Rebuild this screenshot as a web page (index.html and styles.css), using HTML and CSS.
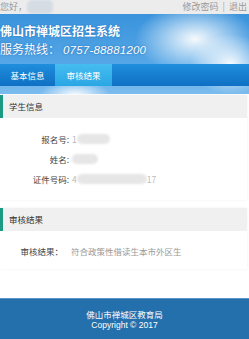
FILE: index.html
```html
<!DOCTYPE html>
<html lang="zh-CN">

<head>
    <meta charset="UTF-8">
    <meta name="viewport" content="width=device-width, initial-scale=1.0">
    <title>佛山市禅城区招生系统</title>
    <link rel="stylesheet" href="styles.css">
</head>

<body>
    <div class="topbar">
        <div class="hello">您好，<span class="blur blur-name"></span></div>
        <div class="links">修改密码 <span class="sep">|</span> 退出</div>
    </div>

    <div class="header">
        <div class="cloud c1"></div>
        <div class="cloud c2"></div>
        <div class="cloud c3"></div>
        <h1 class="title">佛山市禅城区招生系统</h1>
        <div class="hotline">服务热线：<span class="num">0757-88881200</span></div>
        <div class="nav">
            <a href="javascript:;">基本信息</a>
            <a href="javascript:;" class="active">审核结果</a>
        </div>
    </div>

    <div class="panel">
        <div class="panel-head">学生信息</div>
        <div class="panel-body">
            <div class="row">
                <span class="label">报名号:</span>
                <span class="value">1<span class="blur" style="width:33px"></span></span>
            </div>
            <div class="row">
                <span class="label">姓名:</span>
                <span class="value"><span class="blur" style="width:26px"></span></span>
            </div>
            <div class="row">
                <span class="label">证件号码:</span>
                <span class="value">4<span class="blur" style="width:70px"></span>17</span>
            </div>
        </div>
    </div>

    <div class="panel">
        <div class="panel-head">审核结果</div>
        <div class="panel-body result">
            <div class="row">
                <span class="label">审核结果：</span>
                <span class="value gray">符合政策性借读生本市外区生</span>
            </div>
        </div>
    </div>

    <div class="footer">
        <p>佛山市禅城区教育局</p>
        <p>Copyright © 2017</p>
    </div>
</body>

</html>
```

FILE: styles.css
```css
* {
    margin: 0;
    padding: 0;
}

body {
    font-family: "Noto Sans CJK SC", "Liberation Sans", sans-serif;
    background-color: #fff;
    width: 249px;
}

.topbar {
    height: 14px;
    background-color: #ececec;
    display: flex;
    justify-content: space-between;
    align-items: center;
    font-size: 9px;
    color: #999;
    line-height: 14px;
}

.hello {
    display: flex;
    align-items: center;
}

.blur {
    display: inline-block;
    height: 10px;
    background-color: #e6e6e6;
    border-radius: 5px;
    filter: blur(1px);
    vertical-align: middle;
}

.blur-name {
    width: 26px;
    height: 14px;
    background-color: #d5dce4;
}

.links {
    padding-right: 2px;
}

.sep {
    margin: 0 2px;
    color: #aaa;
}

.header {
    position: relative;
    overflow: hidden;
    height: 80px;
    background: linear-gradient(180deg, #3a93dc 0%, #54a6e6 60%, #7cbcee 100%);
}

.cloud {
    position: absolute;
    border-radius: 50%;
    background: radial-gradient(closest-side, rgba(255, 255, 255, 0.95), rgba(255, 255, 255, 0));
}

.c1 {
    left: 135px;
    top: -10px;
    width: 120px;
    height: 70px;
}

.c2 {
    left: 190px;
    top: 20px;
    width: 80px;
    height: 60px;
}

.c3 {
    left: 40px;
    top: 66px;
    width: 70px;
    height: 30px;
}

.title {
    position: relative;
    font-size: 12px;
    font-weight: bold;
    color: #fff;
    line-height: 16px;
    padding-top: 9px;
    text-shadow: 0 0 2px rgba(20, 80, 160, 0.6);
}

.hotline {
    position: relative;
    font-size: 12px;
    color: #fff;
    line-height: 16px;
    margin-top: 2px;
    text-shadow: 0 0 2px rgba(20, 80, 160, 0.7);
}

.num {
    font-family: "Liberation Sans", sans-serif;
    font-style: italic;
    font-size: 11.5px;
    margin-left: 3px;
    letter-spacing: 0.2px;
}

.nav {
    position: relative;
    margin-top: 6px;
    height: 22px;
    display: flex;
    background: linear-gradient(180deg, #1f8fdc 0%, #0f6fc4 100%);
}

.nav a {
    display: block;
    width: 55px;
    text-align: center;
    color: #fff;
    font-size: 8.5px;
    line-height: 22px;
    text-decoration: none;
}

.nav a.active {
    width: 57px;
    background: linear-gradient(180deg, #45bdf0 0%, #2aa6e4 100%);
}

.panel {
    margin: 1px 2px 8px 0;
    background-color: #fff;
    box-shadow: 0 0 3px rgba(0, 0, 0, 0.06);
}

.panel-head {
    height: 23px;
    line-height: 23px;
    background-color: #f0f0f0;
    border-left: 3px solid #1a9a82;
    padding-left: 6px;
    font-size: 8.5px;
    color: #333;
}

.panel-body {
    padding: 11px 0 11px;
}

.row {
    display: flex;
    align-items: center;
    height: 20px;
    font-size: 8.5px;
}

.label {
    width: 69px;
    text-align: right;
    color: #444;
}

.value {
    margin-left: 3px;
    color: #bbb;
    display: flex;
    align-items: center;
}

.result {
    padding: 10px 0 8px;
}

.result .label {
    width: 63px;
}

.value.gray {
    margin-left: 8px;
    color: #9a9a9a;
}

.footer {
    margin-top: 29px;
    height: 41px;
    background-color: #2470ad;
    border-top: 1px solid #5b93c6;
    color: #fff;
    font-family: "Liberation Sans", "Noto Sans CJK SC", sans-serif;
    font-size: 8.5px;
    line-height: 10px;
    text-align: center;
    padding-top: 11px;
    box-sizing: border-box;
}
```
